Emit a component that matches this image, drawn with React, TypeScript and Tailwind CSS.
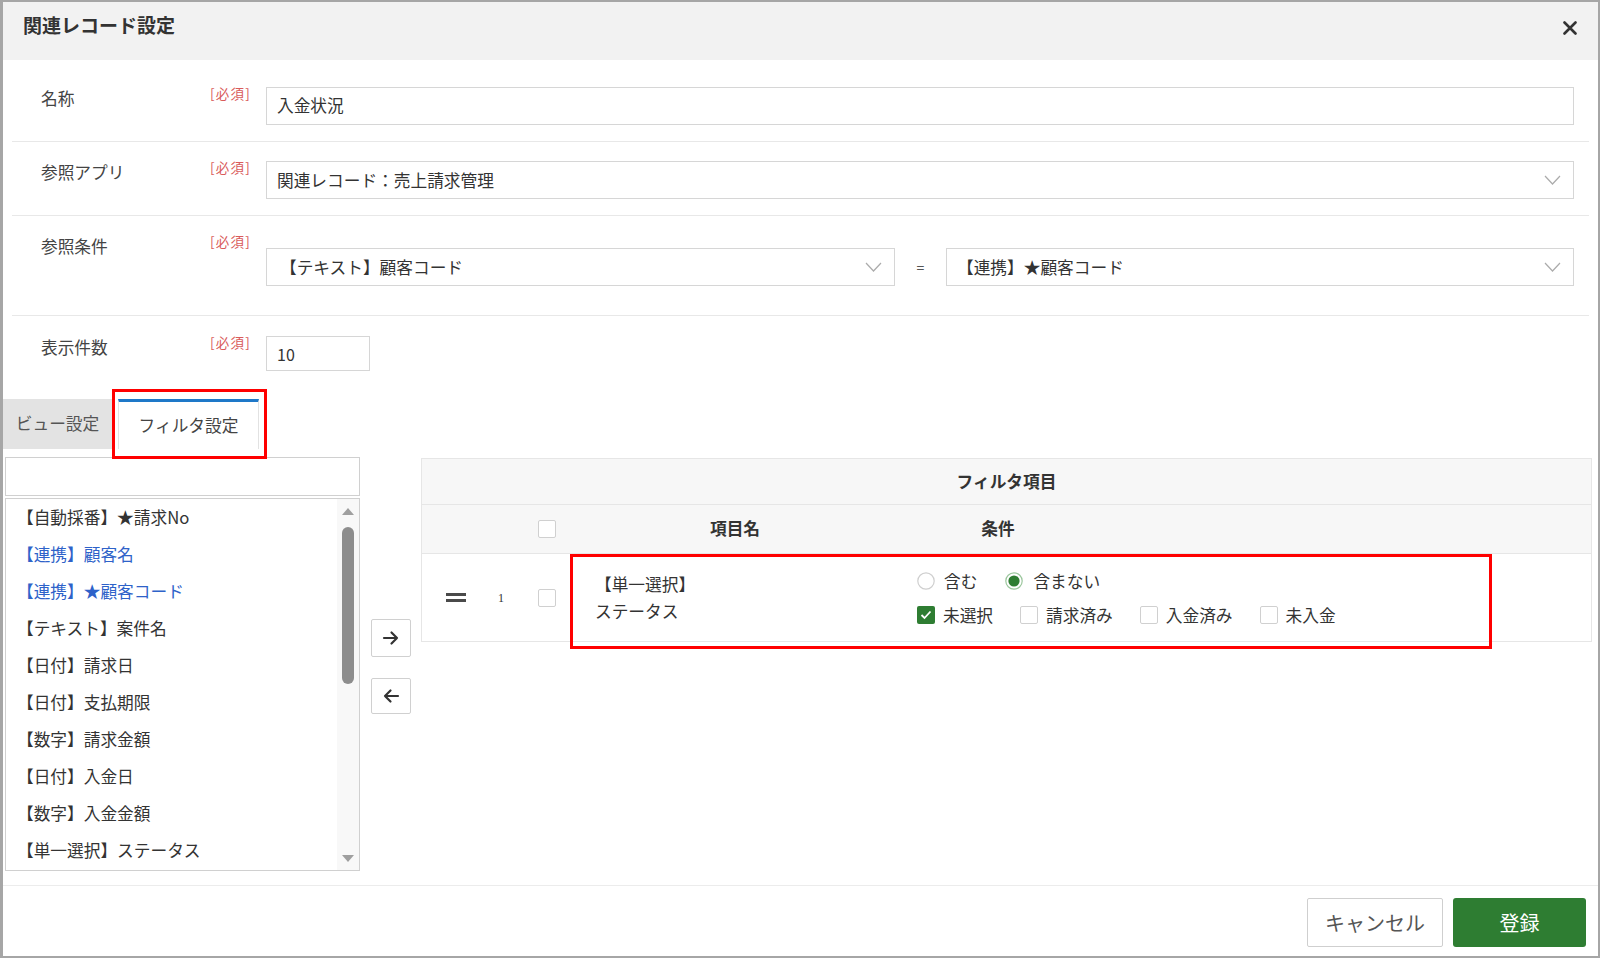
import React from "react";

const FONT = "font-['Noto_Sans_CJK_JP','Noto_Sans',sans-serif]";

const fields = [
  { text: "【自動採番】★請求No", blue: false },
  { text: "【連携】顧客名", blue: true },
  { text: "【連携】★顧客コード", blue: true },
  { text: "【テキスト】案件名", blue: false },
  { text: "【日付】請求日", blue: false },
  { text: "【日付】支払期限", blue: false },
  { text: "【数字】請求金額", blue: false },
  { text: "【日付】入金日", blue: false },
  { text: "【数字】入金金額", blue: false },
  { text: "【単一選択】ステータス", blue: false },
];

function Required() {
  return <span className="block text-[13.5px] leading-[13px] tracking-[1.2px] text-[#d95b5b]">[必須]</span>;
}

function Chevron() {
  return (
    <svg width="17" height="10" viewBox="0 0 17 10" className="shrink-0">
      <path d="M1 1l7.5 8L16 1" fill="none" stroke="#ababab" strokeWidth="1.2" />
    </svg>
  );
}

function Select({ value, className = "" }: { value: string; className?: string }) {
  return (
    <div className={`flex h-[38px] items-center justify-between border border-[#d6d6d6] bg-white pl-[10px] pr-[12px] ${className}`}>
      <span className="text-[16.7px] leading-[22px] text-[#333]">{value}</span>
      <Chevron />
    </div>
  );
}

function FormRow({
  label,
  children,
  last,
  className = "",
}: {
  label: string;
  children: React.ReactNode;
  last?: boolean;
  className?: string;
}) {
  return (
    <div className={`mx-[9px] flex items-start pl-[29px] pr-[15px] ${last ? "" : "border-b border-[#e8e8e8] pb-[16px]"} ${className}`}>
      <div className="w-[169px] shrink-0 text-[16.7px] leading-[22px] text-[#444]">{label}</div>
      <div className="w-[56px] shrink-0">
        <Required />
      </div>
      <div className="min-w-0 flex-1">{children}</div>
    </div>
  );
}

function Box({ checked }: { checked?: boolean }) {
  return checked ? (
    <span className="flex h-[18px] w-[18px] shrink-0 items-center justify-center rounded-[2px] bg-[#2e7d32]">
      <svg width="12" height="10" viewBox="0 0 12 10">
        <path d="M1.5 5l3 3L10.5 1.5" fill="none" stroke="#fff" strokeWidth="1.8" />
      </svg>
    </span>
  ) : (
    <span className="block h-[18px] w-[18px] shrink-0 rounded-[2px] border border-[#d0d0d0] bg-white" />
  );
}

function Radio({ checked }: { checked?: boolean }) {
  return (
    <svg width="18" height="18" viewBox="0 0 18 18" className="shrink-0">
      <circle cx="9" cy="9" r="8.2" fill="#fff" stroke={checked ? "#9cc79e" : "#cfcfcf"} strokeWidth="1.2" />
      {checked && <circle cx="9" cy="9" r="5.6" fill="#2e7d32" />}
    </svg>
  );
}

function Arrow({ dir }: { dir: "right" | "left" }) {
  return (
    <svg width="18" height="16" viewBox="0 0 18 16">
      {dir === "right" ? (
        <path d="M2 8h13M9.5 2.5L15 8l-5.5 5.5" fill="none" stroke="#333" strokeWidth="2.2" strokeLinecap="round" strokeLinejoin="round" />
      ) : (
        <path d="M16 8H3M8.5 2.5L3 8l5.5 5.5" fill="none" stroke="#333" strokeWidth="2.2" strokeLinecap="round" strokeLinejoin="round" />
      )}
    </svg>
  );
}

export default function App() {
  return (
    <div className={`relative flex h-[958px] w-full flex-col border-2 border-l-[3px] border-[#a6a6a6] bg-white ${FONT}`}>
      {/* header */}
      <div className="flex h-[58px] shrink-0 items-start justify-between bg-[#f2f2f2] pl-[20px] pr-[21px]">
        <h1 className="pt-[11px] text-[19px] font-bold leading-[24px] text-[#333]">関連レコード設定</h1>
        <svg width="14" height="14" viewBox="0 0 14 14" className="mt-[19px]">
          <path d="M1.5 1.5l11 11M12.5 1.5l-11 11" stroke="#333" strokeWidth="2.6" strokeLinecap="round" />
        </svg>
      </div>

      {/* body */}
      <div className="flex min-h-0 flex-1 flex-col">
        <div className="pt-[8px]">
          <FormRow label="名称" className="pt-[19px]">
            <div className="flex h-[38px] items-center border border-[#d6d6d6] pl-[10px] text-[16.7px] text-[#333]">入金状況</div>
          </FormRow>
          <FormRow label="参照アプリ" className="pt-[19px]">
            <Select value="関連レコード：売上請求管理" />
          </FormRow>
          <FormRow label="参照条件" className="pt-[19px]">
            <div className="flex items-center py-[13px]">
              <Select value="【テキスト】顧客コード" className="w-[629px] pl-[13px]" />
              <div className="w-[51px] text-center text-[14px] text-[#555]">=</div>
              <Select value="【連携】★顧客コード" className="flex-1" />
            </div>
          </FormRow>
          <FormRow label="表示件数" last className="pt-[20px]">
            <div className="flex h-[35px] w-[104px] items-center border border-[#d6d6d6] pl-[10px] text-[16px] text-[#333]">10</div>
          </FormRow>
        </div>

        {/* tabs */}
        <div className="mt-[28px] flex h-[50px] shrink-0 items-stretch">
          <div className="flex w-[109px] items-center justify-center bg-[#e3e3e3] text-[16.7px] text-[#555]">ビュー設定</div>
          <div className="ml-[6px] flex w-[141px] items-center justify-center border-x border-t-[3px] border-x-[#e2e2e2] border-t-[#1e78c8] bg-white text-[16.7px] text-[#444]">
            フィルタ設定
          </div>
        </div>

        {/* filter area */}
        <div className="flex flex-1 items-start pl-[2px] pr-[6px] pt-[8px]">
          <div className="flex w-[355px] shrink-0 flex-col">
            <div className="h-[39px] border border-[#d0d0d0] bg-white" />
            <div className="mt-[2px] flex h-[373px] border border-[#d0d0d0]">
              <div className="flex-1">
                {fields.map((f) => (
                  <div
                    key={f.text}
                    className={`flex h-[37px] items-center pl-[11px] text-[16.7px] ${f.blue ? "text-[#2e62c9]" : "text-[#333]"}`}
                  >
                    {f.text}
                  </div>
                ))}
              </div>
              <div className="flex w-[22px] flex-col items-center bg-[#f8f8f8]">
                <div className="mt-[9px] h-0 w-0 border-x-[6px] border-b-[7px] border-x-transparent border-b-[#9f9f9f]" />
                <div className="mt-[12px] h-[157px] w-[12px] rounded-full bg-[#8d8d8d]" />
                <div className="mb-[8px] mt-auto h-0 w-0 border-x-[6px] border-t-[7px] border-x-transparent border-t-[#9f9f9f]" />
              </div>
            </div>
          </div>

          <div className="flex h-[414px] w-[61px] shrink-0 flex-col items-center justify-center gap-[21px] pt-[5px]">
            <button className="flex h-[38px] w-[40px] items-center justify-center rounded-[2px] border border-[#d0d0d0] bg-white">
              <Arrow dir="right" />
            </button>
            <button className="flex h-[36px] w-[40px] items-center justify-center rounded-[2px] border border-[#d0d0d0] bg-white">
              <Arrow dir="left" />
            </button>
          </div>

          <div className="mt-[1px] flex-1 border border-[#e6e6e6]">
            <div className="flex h-[46px] items-center justify-center border-b border-[#e6e6e6] bg-[#f7f7f7] text-[16.7px] font-bold text-[#333]">
              フィルタ項目
            </div>
            <div className="flex h-[49px] items-center border-b border-[#e6e6e6] bg-[#f7f7f7] text-[16.7px] font-bold text-[#333]">
              <div className="w-[90px]" />
              <div className="w-[58px] pl-[26px]">
                <Box />
              </div>
              <div className="w-[330px] text-center">項目名</div>
              <div className="w-[196px] text-center">条件</div>
            </div>
            <div className="flex h-[87px] items-center bg-white">
              <div className="flex w-[68px] flex-col items-center gap-[3px]">
                <span className="block h-[3px] w-[20px] bg-[#4a4a4a]" />
                <span className="block h-[3px] w-[20px] bg-[#4a4a4a]" />
              </div>
              <div className="w-[22px] text-center font-['Liberation_Serif',serif] text-[12px] text-[#333]">1</div>
              <div className="w-[58px] pl-[26px]">
                <Box />
              </div>
              <div className="w-[330px] pl-[25px] text-[16.7px] leading-[27px] text-[#333]">
                <div>【単一選択】</div>
                <div>ステータス</div>
              </div>
              <div className="flex flex-1 flex-col gap-[10px] pl-[17px] text-[16.7px] leading-[24px] text-[#333]">
                <div className="flex h-[24px] items-center gap-[28px]">
                  <label className="flex items-center gap-[9px]">
                    <Radio />
                    含む
                  </label>
                  <label className="flex items-center gap-[10px]">
                    <Radio checked />
                    含まない
                  </label>
                </div>
                <div className="flex h-[24px] items-center gap-[27px]">
                  {[
                    { t: "未選択", c: true },
                    { t: "請求済み", c: false },
                    { t: "入金済み", c: false },
                    { t: "未入金", c: false },
                  ].map((o) => (
                    <label key={o.t} className="flex items-center gap-[8px]">
                      <Box checked={o.c} />
                      {o.t}
                    </label>
                  ))}
                </div>
              </div>
            </div>
          </div>
        </div>
      </div>

      {/* footer */}
      <div className="flex h-[71px] shrink-0 items-start justify-end gap-[10px] border-t border-[#ececec] pr-[12px] pt-[12px]">
        <button className="h-[49px] w-[136px] rounded-[2px] border border-[#cfcfcf] bg-white text-[20px] text-[#555]">キャンセル</button>
        <button className="h-[49px] w-[133px] rounded-[3px] bg-[#2e7d32] text-[20px] text-white">登録</button>
      </div>

      {/* annotation boxes */}
      <div className="pointer-events-none absolute left-[109px] top-[387px] h-[70px] w-[155px] border-[3px] border-[#ff0000]" />
      <div className="pointer-events-none absolute left-[567px] top-[552px] h-[95px] w-[922px] border-[3px] border-[#ff0000]" />
    </div>
  );
}
